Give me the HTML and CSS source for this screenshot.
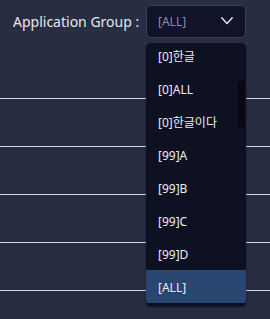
FILE: index.html
```html
<!DOCTYPE html>
<html>
<head>
<meta charset="utf-8">
<link rel="stylesheet" href="styles.css">
</head>
<body>
<div class="page">
  <div class="filter">
    <span class="label">Application Group :</span>
    <div class="select">
      <span class="value">[ALL]</span>
      <svg class="chev" width="12" height="8" viewBox="0 0 12 8"><path d="M0.8 0.8 L6 6.6 L11.2 0.8" fill="none" stroke="#f2f2f6" stroke-width="1.4" stroke-linecap="round" stroke-linejoin="round"/></svg>
    </div>
  </div>
  <div class="rows">
    <div class="row"></div>
    <div class="row"></div>
    <div class="row"></div>
    <div class="row"></div>
    <div class="row"></div>
  </div>
  <div class="menu">
    <ul class="list">
      <li class="item">[0]한글</li>
      <li class="item">[0]ALL</li>
      <li class="item">[0]한글이다</li>
      <li class="item">[99]A</li>
      <li class="item">[99]B</li>
      <li class="item">[99]C</li>
      <li class="item">[99]D</li>
      <li class="item selected">[ALL]</li>
    </ul>
    <div class="thumb"></div>
  </div>
</div>
</body>
</html>
```
FILE: styles.css
```css
html, body {
  margin: 0;
  padding: 0;
  background: #292d42;
  width: 270px;
  height: 319px;
  overflow: hidden;
}
.page {
  position: relative;
  font-family: "Noto Sans", "Noto Sans CJK KR", sans-serif;
  height: 319px;
}
.filter {
  display: flex;
  align-items: center;
  padding: 5px 0 0 13px;
  gap: 9px;
}
.label {
  flex: none;
  width: 124px;
  white-space: nowrap;
  color: #e6e6ee;
  font-size: 14px;
}
.select {
  box-sizing: border-box;
  width: 100px;
  height: 33px;
  border: 1px solid #3b3f55;
  border-radius: 5px;
  background: #10132a;
  display: flex;
  align-items: center;
  justify-content: space-between;
  padding: 0 12px 0 11px;
}
.value {
  color: #8b8fa3;
  font-size: 12px;
}
.chev {
  display: block;
  margin-top: -1px;
}
.rows {
  padding-top: 13px;
}
.row {
  height: 47px;
  border-bottom: 1px solid #d4d4e6;
}
.menu {
  position: absolute;
  left: 146px;
  top: 43px;
  width: 100px;
  height: 262px;
  background: #0e1122;
  border-radius: 5px;
  overflow: hidden;
  box-shadow: 0 2px 2px rgba(8, 9, 20, 0.8);
}
.list {
  list-style: none;
  margin: -4px 0 0 0;
  padding: 0;
}
.item {
  height: 33px;
  line-height: 36px;
  padding-left: 12px;
  color: #ececf2;
  font-size: 12px;
}
.item.selected {
  background: #284670;
}
.thumb {
  position: absolute;
  right: 1px;
  top: 37px;
  width: 7px;
  height: 48px;
  border-radius: 4px;
  background: #070810;
}
```
